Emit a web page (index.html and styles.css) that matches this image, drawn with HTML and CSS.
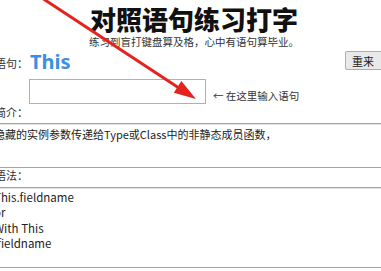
FILE: index.html
```html
<!DOCTYPE html>
<html lang="zh-CN">
<head>
    <meta charset="UTF-8">
    <title>对照语句练习打字</title>
    <link rel="stylesheet" href="styles.css">
</head>
<body>
    <div class="page">
        <h1 class="title">对照语句练习打字</h1>
        <p class="subtitle">练习到盲打键盘算及格，心中有语句算毕业。</p>

        <div class="row-sentence">
            <span class="label">对照语句：</span>
            <span class="sentence">This</span>
            <button class="reset">重来</button>
        </div>

        <div class="row-input">
            <input type="text" class="typing">
            <span class="hint">← 在这里输入语句</span>
        </div>

        <div class="label">函数简介：</div>
        <div class="box box-intro">隐藏的实例参数传递给Type或Class中的非静态成员函数，</div>

        <div class="label">使用语法：</div>
        <div class="box box-syntax">
            <div>This.fieldname</div>
            <div>or</div>
            <div>With This</div>
            <div>.fieldname</div>
        </div>
    </div>

    <!-- red annotation arrow -->
    <svg class="arrow" width="381" height="271" viewBox="0 0 381 271">
        <line x1="42" y1="-2" x2="179" y2="88" stroke="#e5231d" stroke-width="3"/>
        <polygon points="196,99 173.8,92.8 181.4,81" fill="#e5231d"/>
    </svg>
</body>
</html>
```

FILE: styles.css
```css
body {
    margin: 0;
    overflow: hidden;
    background-color: #fff;
    font-family: "Noto Sans CJK SC", "Noto Sans", sans-serif;
    color: #222;
}

.page {
    width: 428px;
    margin-left: -20px;
}

.title {
    margin: 4px 0 0;
    height: 30px;
    font-size: 26px;
    line-height: 30px;
    font-weight: 900;
    text-align: center;
    color: #111;
}

.subtitle {
    margin: 1px 0 0;
    font-size: 10.5px;
    line-height: 14px;
    text-align: center;
    color: #333;
}

.label {
    display: flex;
    justify-content: flex-end;
    width: 48px;
    font-size: 11px;
    line-height: 14px;
    white-space: nowrap;
    overflow: hidden;
    color: #333;
}

.row-sentence {
    display: flex;
    align-items: center;
    height: 22px;
    margin-top: 2px;
}

.row-sentence .label {
    flex-shrink: 0;
    margin-top: 1px;
}

.sentence {
    margin-left: 2px;
    font-family: "Noto Sans", sans-serif;
    font-size: 20px;
    line-height: 22px;
    font-weight: 700;
    color: #3a8fe3;
}

.reset {
    align-self: flex-start;
    margin-left: auto;
    margin-right: 12px;
    width: 51px;
    height: 19px;
    padding: 0 0 0 6px;
    text-align: left;
    font-family: inherit;
    font-size: 11px;
    background-color: #e9e9e9;
    border: 1px solid #adadad;
    border-radius: 2px;
    color: #222;
}

.row-input {
    display: flex;
    align-items: flex-end;
    margin-top: 6px;
    padding-left: 49px;
}

.typing {
    box-sizing: border-box;
    width: 177px;
    height: 25px;
    margin: 0;
    border: 1px solid #8fb9da;
    background: #fff;
}

.hint {
    margin: 0 0 1px 7px;
    font-size: 10.5px;
    line-height: 14px;
    color: #333;
}

.row-input + .label {
    margin-top: 1px;
}

.box {
    border-top: 1px solid #a4a4a4;
    border-bottom: 1px solid #a4a4a4;
    box-shadow: inset 0 1px 0 #e2e2e2;
    padding-left: 14px;
    font-size: 11px;
    color: #222;
}

.box-intro {
    margin-top: 4px;
    height: 40px;
    padding-top: 3px;
    line-height: 15px;
}

.box-syntax {
    margin-top: 5px;
    height: 77px;
    padding-top: 2px;
    line-height: 15.3px;
    font-size: 11.5px;
}

.arrow {
    position: absolute;
    top: 0;
    left: 0;
    pointer-events: none;
}
```
